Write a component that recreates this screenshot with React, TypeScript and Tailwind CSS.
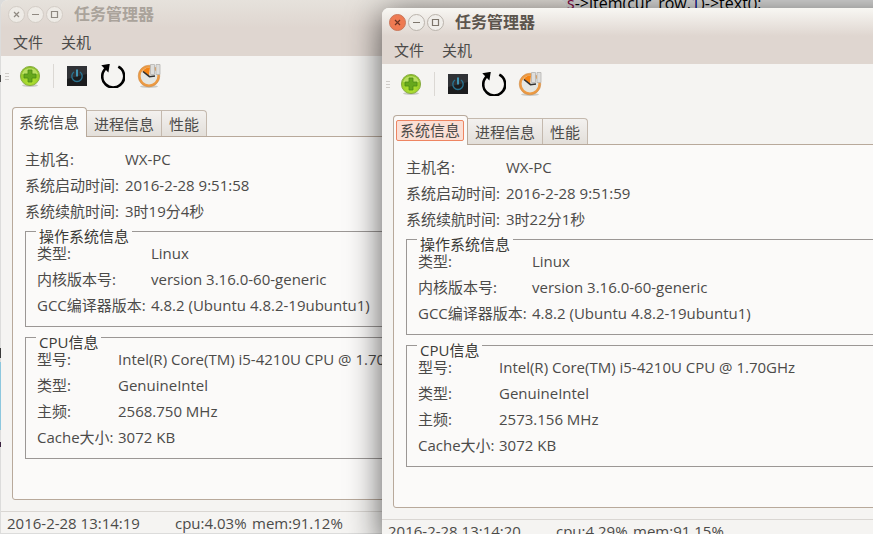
import type { ReactNode } from 'react';

type Row = [string, string];

interface WindowData {
  active: boolean;
  boot: string;
  uptime: string;
  freq: string;
  clock: string;
  cpu: string;
  mem: string;
}

function Rows({ rows, label }: { rows: Row[]; label: string }) {
  return (
    <dl className="flex flex-col">
      {rows.map(([k, v]) => (
        <div key={k} className="flex h-[26px] items-center whitespace-nowrap">
          <dt className={`shrink-0 ${label}`}>{k}</dt>
          <dd>{v}</dd>
        </div>
      ))}
    </dl>
  );
}

function Group({ title, children }: { title: string; children: ReactNode }) {
  return (
    <fieldset className="border border-[#9b9795] pt-[4px] pb-[8px] pl-[11px]">
      <legend className="-ml-px h-[10px] px-[3px] leading-[20px] text-[#3c3b37]">{title}</legend>
      {children}
    </fieldset>
  );
}

function CaptionButton({ label, className, children }: { label: string; className: string; children: ReactNode }) {
  return (
    <button
      type="button"
      aria-label={label}
      className={`flex size-[17px] items-center justify-center rounded-full border ${className}`}
    >
      <svg viewBox="0 0 17 17" className="size-[17px] shrink-0" fill="none" stroke="currentColor" strokeWidth="1.2">
        {children}
      </svg>
    </button>
  );
}

function AddIcon({ id }: { id: string }) {
  return (
    <svg viewBox="0 0 24 24" className="size-[24px]">
      <defs>
        <radialGradient id={id} cx="50%" cy="75%" r="70%">
          <stop offset="0" stopColor="#b5e632" />
          <stop offset="1" stopColor="#8abf27" />
        </radialGradient>
      </defs>
      <ellipse cx="12" cy="21.5" rx="8" ry="1.5" fill="#c9c9c4" />
      <circle cx="12" cy="12" r="9.6" fill={`url(#${id})`} stroke="#8aae45" />
      <path d="M4 10a8.3 8.3 0 0 1 16 0q-8 3-16 0" fill="#d2ec86" opacity=".6" />
      <path d="M10 6h4v4h4v4h-4v4h-4v-4H6v-4h4z" fill="#67a81d" stroke="#4c8a17" strokeWidth=".8" />
    </svg>
  );
}

function PowerIcon() {
  return (
    <svg viewBox="0 0 24 24" className="size-[24px]">
      <rect x="2" y="2" width="20" height="20" fill="#1b1c1e" />
      <path d="M2 2h20v8L2 15z" fill="#303236" />
      <path d="M9 8a5.2 5.2 0 1 0 6 0" fill="none" stroke="#27718f" strokeWidth="1.4" />
      <path d="M12 5.5v7" stroke="#45b4dc" strokeWidth="1.5" />
    </svg>
  );
}

function RestartIcon() {
  return (
    <svg viewBox="0 0 24 24" className="size-[24px]">
      <path d="M17.3 2.700A11 11 0 1 1 5.200 4" fill="none" stroke="#000" strokeWidth="2.600" />
      <path d="M.3 1.300 8.800-.2 7.400 8.400z" fill="#000" />
    </svg>
  );
}

function ClockIcon() {
  return (
    <svg viewBox="-1 0 24 24" className="size-[24px]">
      <ellipse cx="11" cy="22.5" rx="9" ry="1.5" fill="#c9c9c4" />
      <circle cx="11" cy="12" r="9.6" fill="#e4e6e2" stroke="#ed9a42" strokeWidth="2.4" />
      <circle cx="11" cy="12" r="10.8" fill="none" stroke="#c98a4c" strokeWidth=".5" />
      <path d="M11 12 4.5 7.5A8 8 0 0 1 12 3.500z" fill="#f58414" />
      <path d="m5 7.5 6.5 5.2L17 12" fill="none" stroke="#30302f" strokeWidth="1.6" />
      <path d="M12.500 .5h4v10h-4zM18 .5h4v10h-4z" fill="#dededc" stroke="#b5b4b1" strokeWidth=".8" />
    </svg>
  );
}

function Tool({ label, children }: { label: string; children: ReactNode }) {
  return (
    <button type="button" aria-label={label} className="flex size-[24px] items-center justify-center">
      {children}
    </button>
  );
}

function TaskManager({ data }: { data: WindowData }) {
  const { active } = data;
  const plain = active
    ? 'border-[#b9b3ab] bg-[#f0eeea] text-[#7d766c]'
    : 'border-[#d2ccc5] bg-[#eeebe6] text-[#8f8981]';
  const close = active ? 'border-[#c9775a] bg-[#ee7a52] text-[#6b3323]' : plain;
  return (
    <section className="flex flex-col overflow-hidden rounded-t-[7px] bg-[#f5f4f2]">
      <header
        className={`flex h-[28px] items-center gap-[2px] bg-linear-to-b pl-[7px] ${
          active ? 'from-[#f8f7f3] to-[#dfd6d0]' : 'from-[#e6e2dc] to-[#dfd6d0]'
        }`}
      >
        <CaptionButton label="关闭" className={close}>
          <path d="m6 6 5 5m0-5-5 5" />
        </CaptionButton>
        <CaptionButton label="最小化" className={plain}>
          <path d="M5 8.500h7" />
        </CaptionButton>
        <CaptionButton label="最大化" className={plain}>
          <path d="M5.500 5.500h6v6h-6z" />
        </CaptionButton>
        <h1 className={`pl-[9px] text-[16px] leading-[28px] font-bold ${active ? 'text-[#5c554d]' : 'text-[#aaa39b]'}`}>
          任务管理器
        </h1>
      </header>
      <nav className="flex h-[28px] gap-[18px] bg-[#dfd6d0] pl-[12px]">
        <button type="button">文件</button>
        <button type="button">关机</button>
      </nav>
      <div className="flex h-[40px] items-center pl-[4px]">
        <div className="mr-[9px] flex flex-col gap-[2px]">
          <i className="h-px w-[4px] bg-[#cfccc8]" />
          <i className="h-px w-[4px] bg-[#cfccc8]" />
          <i className="h-px w-[4px] bg-[#cfccc8]" />
        </div>
        <Tool label="新建">
          <AddIcon id={active ? 'add-front' : 'add-back'} />
        </Tool>
        <div className="mx-[11px] h-[24px] w-px bg-[#dbd8d4]" />
        <div className="flex gap-[12px]">
          <Tool label="关机">
            <PowerIcon />
          </Tool>
          <Tool label="重启">
            <RestartIcon />
          </Tool>
          <Tool label="暂停">
            <ClockIcon />
          </Tool>
        </div>
      </div>
      <main className="mx-[11px] pt-[11px]">
        <div role="tablist" className="flex items-end">
          <button
            type="button"
            role="tab"
            aria-selected="true"
            className="relative z-10 -mb-px flex h-[30px] items-center rounded-t-[4px] border border-b-0 border-[#b8a99b] bg-[#fbfaf9] pr-[3px] pl-[2px]"
          >
            <span
              className={`rounded-[2px] border px-[3px] leading-[19px] ${
                active ? 'border-[#ee8562] bg-[#fbdfd5]' : 'border-transparent'
              }`}
            >
              系统信息
            </span>
          </button>
          <button
            type="button"
            role="tab"
            className="h-[26px] border-t border-r border-[#c4b9ae] bg-linear-to-b from-[#f3f1ef] to-[#e3dfda] px-[7px]"
          >
            进程信息
          </button>
          <button
            type="button"
            role="tab"
            className="h-[26px] rounded-tr-[4px] border-t border-r border-[#c4b9ae] bg-linear-to-b from-[#f3f1ef] to-[#e3dfda] px-[7px]"
          >
            性能
          </button>
        </div>
        <div className="rounded-b-[3px] border border-[#b8a99b] bg-[#fbfaf9] px-[12px] pt-[9px] pb-[40px]">
          <Rows
            label="w-[100px]"
            rows={[
              ['主机名:', 'WX-PC'],
              ['系统启动时间:', data.boot],
              ['系统续航时间:', data.uptime],
            ]}
          />
          <div className="flex flex-col gap-[5px] pt-[2px]">
            <Group title="操作系统信息">
              <Rows
                label="w-[114px]"
                rows={[
                  ['类型:', 'Linux'],
                  ['内核版本号:', 'version 3.16.0-60-generic'],
                  ['GCC编译器版本:', '4.8.2 (Ubuntu 4.8.2-19ubuntu1)'],
                ]}
              />
            </Group>
            <Group title="CPU信息">
              <Rows
                label="w-[81px]"
                rows={[
                  ['型号:', 'Intel(R) Core(TM) i5-4210U CPU @ 1.70GHz'],
                  ['类型:', 'GenuineIntel'],
                  ['主频:', data.freq],
                  ['Cache大小:', '3072 KB'],
                ]}
              />
            </Group>
          </div>
        </div>
      </main>
      <footer className="mt-[11px] flex h-[22px] border-t border-[#d9d6d2] pl-[6px] leading-[22px] whitespace-nowrap">
        <span className="w-[168px]">{data.clock}</span>
        <span className="w-[77px]">cpu:{data.cpu}</span>
        <span>mem:{data.mem}</span>
      </footer>
    </section>
  );
}

const back: WindowData = {
  active: false,
  boot: '2016-2-28 9:51:58',
  uptime: '3时19分4秒',
  freq: '2568.750 MHz',
  clock: '2016-2-28 13:14:19',
  cpu: '4.03%',
  mem: '91.12%',
};

const front: WindowData = {
  active: true,
  boot: '2016-2-28 9:51:59',
  uptime: '3时22分1秒',
  freq: '2573.156 MHz',
  clock: '2016-2-28 13:14:20',
  cpu: '4.29%',
  mem: '91.15%',
};

export default function App() {
  return (
    <div className="relative h-screen overflow-hidden bg-[#dcdcdb] font-['Open_Sans','Noto_Sans_CJK_SC',sans-serif] text-[15px] leading-[24px] text-[#4c4b49]">
      <code className="absolute -top-[9px] left-[567px] font-[inherit] text-[16px] text-black">
        <span className="text-[#800040]">s</span>-&gt;item(cur_row,<span className="text-[#000080]">1</span>)-&gt;text();
      </code>
      <i className="absolute top-[75px] left-0 h-[7px] w-px bg-[#4a4a4a]" />
      <i className="absolute top-[348px] left-0 h-[10px] w-px bg-[#3a3a3a]" />
      <i className="absolute top-[362px] left-0 h-[68px] w-px bg-[#8cc7de]" />
      <i className="absolute top-[442px] left-0 h-[5px] w-px bg-[#3b2440]" />
      <div className="absolute top-0 left-px w-[565px]">
        <TaskManager data={back} />
      </div>
      <div className="absolute top-[8px] -right-[74px] left-[382px] rounded-t-[7px] shadow-[0_6px_34px_rgba(0,0,0,0.65)]">
        <TaskManager data={front} />
      </div>
    </div>
  );
}
